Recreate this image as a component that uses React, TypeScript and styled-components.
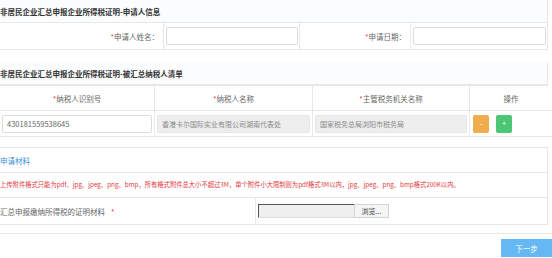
import React from 'react'
import styled, { createGlobalStyle } from 'styled-components'

const GlobalStyle = createGlobalStyle`
  html, body {
    margin: 0;
    padding: 0;
    background: #fff;
    overflow: hidden;
  }
  body {
    font-family: "Noto Sans CJK SC", "Liberation Sans", sans-serif;
    font-size: 7.5px;
    color: #666;
  }
  * { box-sizing: border-box; }
`

const Page = styled.div`
  width: 552px;
  height: 258px;
  display: flex;
  flex-direction: column;
`

const Panel = styled.section<{ $mt?: number }>`
  width: 548px;
  margin-top: ${p => p.$mt ?? 0}px;
  border: 1px solid #e8e8e8;
  border-left: none;
  border-top: none;
`

const PanelHead = styled.div`
  height: 23px;
  line-height: 23px;
  background: #fbfcfd;
  border-bottom: 1px solid #e8e8e8;
  font-weight: bold;
  color: #333;
  white-space: nowrap;
`

const FormRow = styled.div`
  display: grid;
  grid-template-columns: 164px 136px 111px 136px;
  height: 26px;
`

const Label = styled.div`
  display: flex;
  align-items: center;
  justify-content: flex-end;
  padding-right: 4px;
  border-right: 1px solid #e8e8e8;
  white-space: nowrap;
  &:last-child { border-right: none; }
`

const Cell = styled.div<{ $last?: boolean }>`
  display: flex;
  align-items: center;
  padding: 0 1px 0 2px;
  border-right: ${p => (p.$last ? 'none' : '1px solid #e8e8e8')};
`

const Star = styled.span`
  color: #e33;
`

const TextInput = styled.input<{ $disabled?: boolean }>`
  width: 100%;
  height: 18px;
  border: 1px solid ${p => (p.$disabled ? '#e5e5e5' : '#dcdcdc')};
  border-radius: 2px;
  background: ${p => (p.$disabled ? '#eeeeee' : '#fff')};
  font: inherit;
  font-size: ${p => (p.$disabled ? '7px' : '7.5px')};
  color: ${p => (p.$disabled ? '#888' : '#666')};
  padding: 0 4px;
  outline: none;
`

const Table = styled.div`
  display: grid;
  grid-template-columns: 155px 158px 157px 82px;
  width: 552px;
`

const Th = styled.div`
  height: 25px;
  display: flex;
  align-items: center;
  justify-content: center;
  border-bottom: 1px solid #e8e8e8;
  border-right: 1px solid #e8e8e8;
  white-space: nowrap;
  &:nth-child(4) { border-right: none; }
`

const Td = styled.div<{ $last?: boolean }>`
  height: 26px;
  display: flex;
  align-items: center;
  gap: 7px;
  padding: 0 2px;
  border-bottom: 1px solid #e8e8e8;
  border-right: ${p => (p.$last ? 'none' : '1px solid #e8e8e8')};
`

const OpButton = styled.button<{ $color: string; $first?: boolean }>`
  width: 16px;
  height: 18px;
  border: none;
  border-radius: 2px;
  background: ${p => p.$color};
  color: #fff;
  font-size: 7px;
  padding: 0;
  margin-left: ${p => (p.$first ? '1px' : '0')};
`

const MaterialTitle = styled.div`
  height: 26px;
  line-height: 25px;
  color: #3b8fd9;
  border-bottom: 1px solid #e8e8e8;
  border-top: 1px solid #e8e8e8;
`

const Notice = styled.div`
  height: 25px;
  line-height: 24px;
  color: #e4393c;
  font-size: 6.3px;
  white-space: nowrap;
  border-bottom: 1px solid #e8e8e8;
`

const UploadRow = styled.div`
  display: grid;
  grid-template-columns: 256px 1fr;
  height: 26px;
`

const UploadLabel = styled.div`
  display: flex;
  align-items: center;
  gap: 6px;
  border-right: 1px solid #e8e8e8;
  white-space: nowrap;
`

const FileBox = styled.div`
  display: flex;
  align-items: center;
  padding-left: 2px;
`

const FilePath = styled.div`
  width: 96px;
  height: 14px;
  background: #f0f0f0;
  border-top: 1px solid #555;
  border-left: 1px solid #555;
  border-bottom: 1px solid #ddd;
`

const Browse = styled.div`
  width: 35px;
  height: 14px;
  line-height: 13px;
  text-align: center;
  background: #f5f5f5;
  border: 1px solid #d4d4d4;
  color: #444;
  font-size: 7px;
`

const Divider = styled.hr`
  width: 552px;
  margin: 8px 0 0;
  border: none;
  border-top: 1px solid #e8e8e8;
`

const Footer = styled.div`
  display: flex;
  justify-content: flex-end;
  padding-top: 5px;
`

const NextButton = styled.button`
  width: 51px;
  height: 18px;
  border: none;
  background: #66b8f2;
  color: #fff;
  font: inherit;
  font-size: 7.5px;
`

export default function App() {
  return (
    <Page>
      <GlobalStyle />
      <Panel>
        <PanelHead>非居民企业汇总申报企业所得税证明-申请人信息</PanelHead>
        <FormRow>
          <Label><Star>*</Star>申请人姓名：</Label>
          <Cell><TextInput /></Cell>
          <Label><Star>*</Star>申请日期：</Label>
          <Cell $last><TextInput /></Cell>
        </FormRow>
      </Panel>

      <Panel $mt={12}>
        <PanelHead>非居民企业汇总申报企业所得税证明-被汇总纳税人清单</PanelHead>
      </Panel>
      <Table>
        <Th><Star>*</Star>纳税人识别号</Th>
        <Th><Star>*</Star>纳税人名称</Th>
        <Th><Star>*</Star>主管税务机关名称</Th>
        <Th>操作</Th>
        <Td><TextInput defaultValue="430181559538645" /></Td>
        <Td><TextInput $disabled readOnly defaultValue="香港卡尔国际实业有限公司湖南代表处" /></Td>
        <Td><TextInput $disabled readOnly defaultValue="国家税务总局浏阳市税务局" /></Td>
        <Td $last>
          <OpButton $color="#f0ad4e" $first>-</OpButton>
          <OpButton $color="#4cc574">+</OpButton>
        </Td>
      </Table>

      <Panel $mt={10}>
        <MaterialTitle>申请材料</MaterialTitle>
        <Notice>
          上传附件格式只能为pdf、jpg、jpeg、png、bmp，所有格式附件总大小不超过3M，单个附件小大限制则为pdf格式3M以内，jpg、jpeg、png、bmp格式200K以内。
        </Notice>
        <UploadRow>
          <UploadLabel>汇总申报缴纳所得税的证明材料<Star>*</Star></UploadLabel>
          <FileBox>
            <FilePath />
            <Browse>浏览...</Browse>
          </FileBox>
        </UploadRow>
      </Panel>

      <Divider />
      <Footer>
        <NextButton>下一步</NextButton>
      </Footer>
    </Page>
  )
}
